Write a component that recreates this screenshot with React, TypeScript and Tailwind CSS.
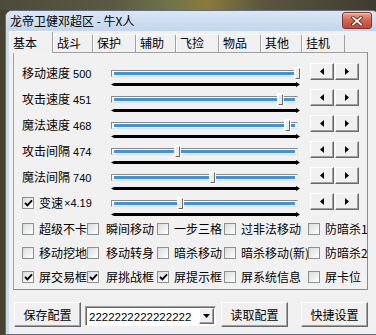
import React from "react";

const raised =
  "border border-t-white border-l-white border-r-[#696969] border-b-[#696969] bg-[#f0f0f0] shadow-[inset_-1px_-1px_0_#a0a0a0]";

const tabs = [
  { name: "基本", w: "w-[44px]" },
  { name: "战斗", w: "w-[40px]" },
  { name: "保护", w: "w-[43px]" },
  { name: "辅助", w: "w-[40px]" },
  { name: "飞捡", w: "w-[43px]" },
  { name: "物品", w: "w-[42px]" },
  { name: "其他", w: "w-[41px]" },
  { name: "挂机", w: "w-[43px]" },
];

const sliders = [
  { name: "移动速度", value: "500", pos: 184 },
  { name: "攻击速度", value: "451", pos: 167 },
  { name: "魔法速度", value: "468", pos: 174 },
  { name: "攻击间隔", value: "474", pos: 64 },
  { name: "魔法间隔", value: "740", pos: 99 },
];

const checks: [string, boolean][][] = [
  [["超级不卡", false], ["瞬间移动", false], ["一步三格", false], ["过非法移动", false], ["防暗杀1", false]],
  [["移动挖地", false], ["移动转身", false], ["暗杀移动", false], ["暗杀移动(新)", false], ["防暗杀2", false]],
  [["屏交易框", true], ["屏挑战框", true], ["屏提示框", true], ["屏系统信息", false], ["屏卡位", false]],
];

function Check({ on }: { on: boolean }) {
  return (
    <span className="flex h-[12px] w-[12px] shrink-0 items-center justify-center border border-[#8e8f8f] bg-gradient-to-br from-[#d9dbde] to-white">
      {on && (
        <svg width="9" height="8" viewBox="0 0 9 8">
          <path d="M1 3.8 L3.4 6.3 L8 1.3" fill="none" stroke="#000" strokeWidth="1.9" />
        </svg>
      )}
    </span>
  );
}

function Track({ pos }: { pos: number }) {
  return (
    <div className="w-[188px] pt-[10px]">
      <div className="relative h-[7px] w-[187px] border border-t-[#8a8a8a] border-l-[#8a8a8a] border-r-[#e3e3e3] border-b-[#e3e3e3] bg-white px-[2px] py-[1px]">
        <div className="h-full bg-[#3d92e3]" />
        <div
          className="absolute top-[-3px] h-[11px] w-[5px] border border-t-white border-l-white border-r-[#6a6a6a] border-b-[#6a6a6a] bg-[#ececec] shadow-[0_0_0_1px_#ffffff]"
          style={{ left: pos - 1 }}
        />
      </div>
      <svg className="mt-[5px] block" width="189" height="5" viewBox="0 0 189 5">
        <polygon points="0,2.5 3,1 185,1 185,0 189,2.5 185,5 185,4 3,4" fill="#000" />
      </svg>
    </div>
  );
}

function Spin() {
  return (
    <div className="ml-[11px] flex gap-[1px] pt-[3px]">
      <div className={`flex h-[17px] w-[24px] items-center justify-center ${raised}`}>
        <svg width="4" height="7" viewBox="0 0 4 7">
          <polygon points="4,0 4,7 0,3.5" fill="#000" />
        </svg>
      </div>
      <div className={`flex h-[17px] w-[24px] items-center justify-center ${raised}`}>
        <svg width="4" height="7" viewBox="0 0 4 7">
          <polygon points="0,0 0,7 4,3.5" fill="#000" />
        </svg>
      </div>
    </div>
  );
}

export default function App() {
  return (
    <div className="flex h-[335px] w-[376px] flex-col overflow-hidden bg-[#47432f] font-['Noto_Sans_CJK_SC',sans-serif] text-[12px] leading-[16px] text-black">
      <div className="h-[10px] shrink-0 bg-[linear-gradient(90deg,#4d4a3a_0%,#5b5944_30%,#6f7448_45%,#8a7a3c_55%,#5a5640_70%,#3e3c30_100%)]" />
      <div className="ml-[5px] flex h-[325px] w-[374px] shrink-0 flex-col rounded-t-[7px] border border-[#5e6d7f] bg-[#cddbec]">
        {/* title bar */}
        <div className="flex h-[20px] shrink-0 items-start justify-between rounded-t-[6px] bg-gradient-to-b from-[#dae6f4] to-[#c4d6ec] pl-[4px] pr-[6px]">
          <span className="mt-[2px] text-[12px] leading-[16px] text-black">龙帝卫健邓超区 - 牛X人</span>
          <div className="mt-[1px] flex h-[17px] w-[30px] items-center justify-center rounded-[3px] border border-[#83352a] bg-gradient-to-b from-[#e9a696] via-[#d26451] to-[#c0473a] shadow-[inset_0_1px_0_#f3c7bb]">
            <svg width="12" height="10" viewBox="0 0 12 10">
              <path d="M2 1.5 L10 8.5 M10 1.5 L2 8.5" stroke="#5a1d15" strokeWidth="3.4" strokeLinecap="square" />
              <path d="M2 1.5 L10 8.5 M10 1.5 L2 8.5" stroke="#ffffff" strokeWidth="1.8" strokeLinecap="square" />
            </svg>
          </div>
        </div>
        {/* client area */}
        <div className="ml-[3px] flex flex-1 flex-col bg-[#f0f0f0]">
          <div className="flex h-[21px] shrink-0 items-end">
            {tabs.map((t, i) =>
              i === 0 ? (
                <div
                  key={t.name}
                  className={`relative z-10 -mb-px h-[22px] ${t.w} rounded-t-[2px] border-t border-l border-r border-t-white border-l-white border-r-[#a0a0a0] bg-[#f0f0f0] pl-[3px] pt-[3px]`}
                >
                  {t.name}
                </div>
              ) : (
                <div
                  key={t.name}
                  className={`h-[18px] ${t.w} rounded-t-[2px] border-t border-l border-r border-t-white border-l-white border-r-[#a0a0a0] pl-[3px]`}
                >
                  {t.name}
                </div>
              )
            )}
          </div>
          <div className="ml-[4px] h-[238px] w-[355px] shrink-0 border border-t-[#a0a0a0] border-l-[#a0a0a0] border-r-[#8a8a8a] border-b-[#8a8a8a] bg-[#f1f1f1] pt-[7px]">
            {sliders.map((s) => (
              <div key={s.name} className="flex h-[26px]">
                <div className="w-[97px] whitespace-nowrap pl-[8px] pt-[5px]">
                  {s.name}
                  <span className="ml-[3px] font-['Liberation_Sans',sans-serif] text-[11px]">{s.value}</span>
                </div>
                <Track pos={s.pos} />
                <Spin />
              </div>
            ))}
            <div className="flex h-[26px]">
              <div className="flex w-[97px] items-start whitespace-nowrap pl-[8px] pt-[5px]">
                <span className="mt-[2px]">
                  <Check on={true} />
                </span>
                <span className="ml-[5px]">变速</span>
                <span className="ml-[1px] font-['Liberation_Sans',sans-serif] text-[11px]">×4.19</span>
              </div>
              <Track pos={67} />
              <Spin />
            </div>
            <div className="mt-[1px] pl-[8px]">
              {checks.map((row, r) => (
                <div
                  key={r}
                  className={`grid ${r === 2 ? "h-[23px]" : "h-[24px]"} grid-cols-[65px_70px_67px_84px_60px] items-center`}
                >
                  {row.map(([label, on], c) => (
                    <div key={label} className="flex items-center whitespace-nowrap">
                      <Check on={on} />
                      <span className={c === 1 ? "ml-[7px]" : "ml-[5px]"}>{label}</span>
                    </div>
                  ))}
                </div>
              ))}
            </div>
          </div>
          {/* bottom bar */}
          <div className="mt-[12px] flex items-start pl-[5px]">
            <div className={`flex h-[25px] w-[67px] items-center justify-center ${raised}`}>保存配置</div>
            <div className="ml-[4px] mt-[4px] flex h-[20px] w-[131px] items-center border border-t-[#a0a0a0] border-l-[#a0a0a0] border-r-white border-b-white bg-white shadow-[inset_1px_1px_0_#696969]">
              <span className="flex-1 overflow-hidden pl-[3px] pt-[1px] font-['Liberation_Sans',sans-serif] text-[11.5px]">
                2222222222222222
              </span>
              <div className={`mr-[1px] flex h-[16px] w-[15px] items-center justify-center ${raised}`}>
                <svg width="7" height="4" viewBox="0 0 7 4">
                  <polygon points="0,0 7,0 3.5,4" fill="#000" />
                </svg>
              </div>
            </div>
            <div className={`ml-[5px] flex h-[25px] w-[67px] items-center justify-center ${raised}`}>读取配置</div>
            <div className={`ml-[13px] flex h-[25px] w-[67px] items-center justify-center ${raised}`}>快捷设置</div>
          </div>
        </div>
      </div>
    </div>
  );
}
